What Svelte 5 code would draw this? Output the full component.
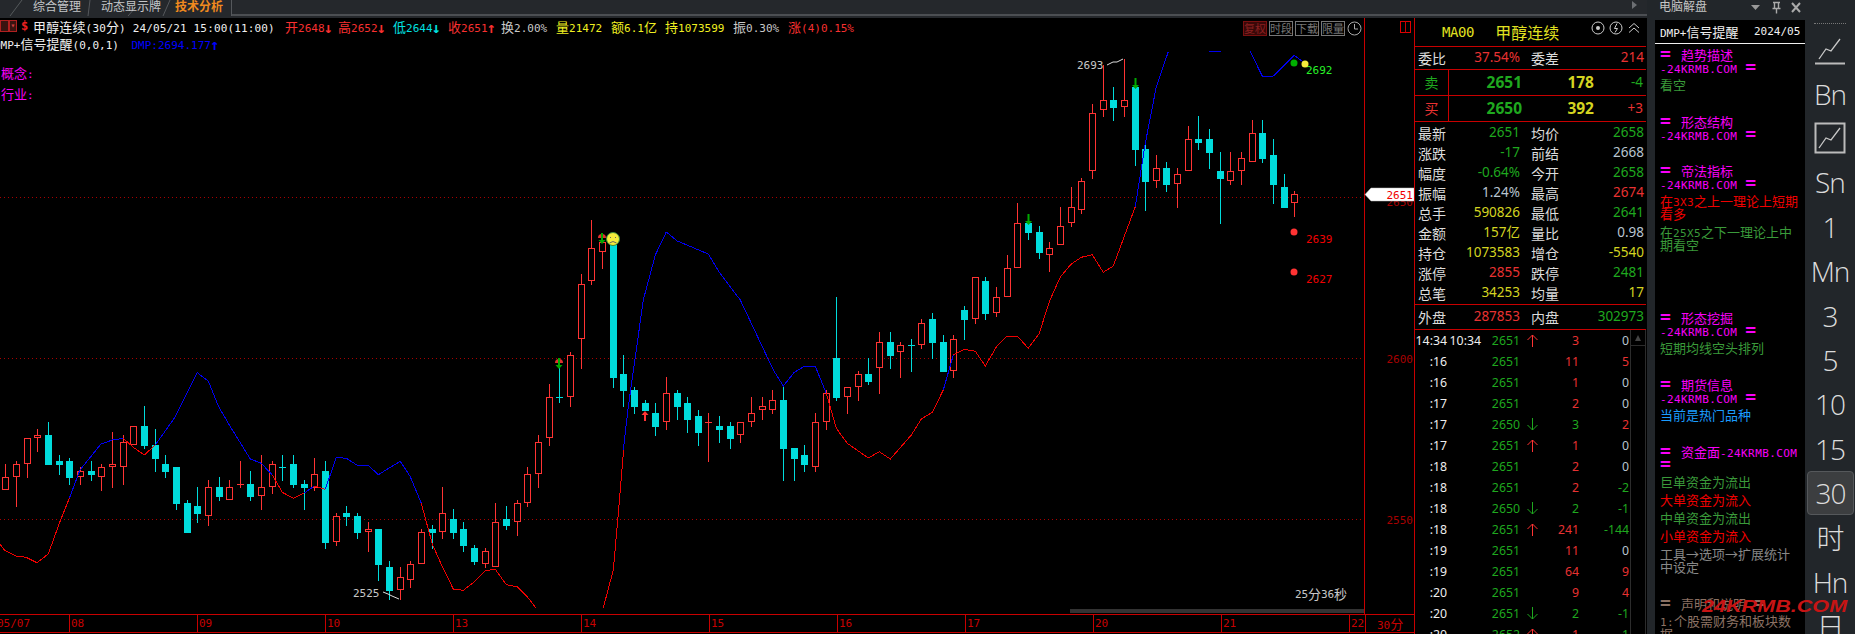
<script>
  const seg = (x0, y0, rows) => rows.map(([x, hi, top, bot, lo, up]) => {
    const col = Math.floor(x0 + x / 3);
    const r = (v) => Math.floor(y0 + v / 3);
    return { col, hi: r(hi), top: r(top), bot: r(bot), lo: r(lo), up: !!up, doji: bot - top < 5 };
  });
  const candles = [
    ...seg(0, 330, [
      [16,402,441,479,479,1],[49,393,403,440,528,1],[82,325,325,401,441,1],[112,297,316,323,363,1],[145,276,315,402,402,0],
      [178,375,393,402,432,0],[208,384,393,441,462,0],[241,411,424,440,462,1],[274,393,423,432,450,0],[304,402,412,440,480,1],
      [337,306,403,410,471,1],[370,315,337,410,462,1],[400,289,289,344,344,1],[433,228,288,345,354,0],[466,297,345,384,423,0],
      [496,375,402,423,441,0],[529,411,411,519,537,0],[562,510,519,606,606,0],[592,471,528,549,576,0],[625,450,472,557,585,1],
      [658,441,471,498,510,0],[688,450,472,509,509,1],[721,393,462,466,471,1],[751,423,462,498,510,0],[784,375,472,497,537,1],
      [817,393,403,470,489,1],[847,375,411,413,450,0],[880,375,402,462,471,0],[913,450,462,471,537,0],[943,384,433,471,480,1],
      [976,393,423,636,654,0],[1009,549,559,635,645,1],[1039,528,549,558,585,0],[1072,549,558,606,624,0],[1105,576,598,605,663,1],
      [1135,597,597,702,750,0],[1168,693,711,780,807,0],[1201,711,742,779,807,1],[1231,693,703,748,771,1],[1264,597,607,701,701,1],
      [1297,585,597,606,654,0],[1327,471,550,605,624,1],[1360,537,567,606,624,0],[1390,576,597,645,663,0],[1423,645,654,693,702,0],
    ]),
    ...seg(400, 420, [
      [256,384,394,430,441,1],[286,249,307,439,439,1],[319,258,297,315,327,0],[352,240,250,304,345,1],[382,141,163,248,258,1],[415,45,67,160,201,1],
    ]),
    ...seg(480, 200, [
      [208,552,592,713,735,1],[238,505,591,594,608,0],[271,456,466,590,618,1],[304,222,253,416,504,1],[334,60,145,242,252,1],
      [367,110,127,155,204,1],[400,135,135,531,561,0],[430,465,522,570,618,0],[463,561,570,618,639,0],[496,600,609,630,630,0],
      [526,609,639,678,705,0],[559,531,580,665,687,1],[592,570,579,618,657,0],[622,591,609,657,696,0],[655,630,648,696,735,0],
      [685,639,666,668,783,1],[718,648,678,687,726,0],[751,666,678,714,744,0],[781,667,667,704,726,1],[814,591,640,665,678,1],
      [847,591,619,628,657,1],[877,570,601,628,639,1],[910,561,600,744,840,0],[943,744,744,774,840,0],[973,735,765,792,813,0],
      [1006,639,667,800,813,1],[1039,570,580,665,687,1],[1069,291,474,591,600,0],[1102,562,562,590,639,1],[1135,513,523,560,600,1],
      [1165,474,522,543,552,0],[1198,396,427,503,579,1],[1231,396,426,465,504,0],[1261,426,436,455,531,1],[1294,417,435,438,513,0],
      [1324,357,370,434,444,1],[1357,339,357,426,474,0],[1390,405,426,513,513,0],[1420,405,418,512,531,1],
    ]),
    ...seg(900, 40, [
      [193,798,810,837,897,0],[226,712,712,836,849,1],[256,711,723,819,837,0],[289,741,772,818,828,1],[322,645,685,770,770,1],
      [352,489,550,683,683,1],[385,540,549,576,597,0],[418,558,576,636,654,0],[448,606,625,644,693,1],[481,501,559,614,614,1],
      [514,441,502,548,558,1],[544,414,424,509,519,1],[577,192,220,391,414,1],[610,75,181,209,228,1],[640,141,181,201,240,0],
      [673,57,181,200,228,1],[706,141,141,327,375,0],[736,306,327,423,510,0],[769,345,385,422,441,1],[799,366,384,432,453,0],
      [832,384,403,431,501,1],[865,258,298,392,392,1],[895,228,297,306,327,0],[928,267,297,336,384,0],[961,336,393,414,549,0],
      [991,336,394,422,432,1],[1024,336,355,392,432,1],[1057,240,280,365,365,1],[1087,240,279,354,366,0],[1120,297,345,432,489,0],
      [1153,402,441,501,501,0],[1183,453,463,488,528,1],
    ]),
  ];

  const poly = (x0, y0, pts) => pts.map(([x, y]) => `${(x0 + x / 3).toFixed(1)},${(y0 + y / 3).toFixed(1)}`).join(' ');
  const RED = '#f00000', BLUE = '#0000f0';
  const lines = [
    [RED, poly(0,330,[[0,643],[15,662],[48,678],[78,682],[111,698],[145,672],[178,580],[208,505]])],
    [BLUE, poly(0,330,[[208,505],[240,420],[303,342],[337,330],[370,325]])],
    [RED, poly(0,330,[[370,325],[400,352],[433,375],[466,345]])],
    [BLUE, poly(0,330,[[466,345],[526,260],[592,128],[625,153],[655,228],[688,285],[751,387],[784,400],[817,435]])],
    [RED, poly(0,330,[[817,435],[847,487],[880,505],[913,489]])],
    [BLUE, poly(0,330,[[913,489],[943,468]])],
    [RED, poly(0,330,[[943,468],[976,478]])],
    [BLUE, poly(0,330,[[976,478],[1009,382],[1039,385],[1072,406],[1105,406],[1135,434],[1201,394],[1231,440],[1264,520]])],
    [RED, poly(0,330,[[1264,520],[1297,642],[1327,710],[1360,777]])],
    [RED, poly(400,420,[[160,507],[190,511],[223,486],[256,452],[286,448],[319,494],[352,500],[385,534],[407,563]])],
    [RED, poly(400,420,[[610,563],[640,450],[655,280],[670,100],[670,90]])],
    [BLUE, poly(480,200,[[430,750],[445,620],[490,300],[526,165],[559,96],[592,123],[685,162],[720,220],[781,300],[880,510],[910,558],[943,517],[973,499],[1006,499],[1039,580]])],
    [RED, poly(480,200,[[1039,580],[1069,685],[1102,730],[1165,774],[1198,755],[1231,777],[1294,705],[1324,657],[1357,637],[1390,570]])],
    [BLUE, poly(480,200,[[1390,570],[1420,465]])],
    [RED, poly(900,40,[[160,945],[193,928],[226,934],[256,978],[289,921],[322,888],[352,888],[385,925],[418,880],[448,785],[481,711],[514,672],[544,652],[577,644],[610,697],[640,678],[706,500]])],
    [BLUE, poly(900,40,[[706,500],[736,310],[769,140],[805,35]])],
    [BLUE, poly(900,40,[[928,34],[963,34]])],
    [BLUE, poly(900,40,[[1050,34],[1087,108],[1120,108],[1183,46],[1215,70]])],
  ];

  const arrow = (x, top, bot, dir) => dir === 'down'
    ? `M${x - 1} ${top}h2v${bot - top - 4}h2.5l-3.5 4l-3.5 -4h2.5z`
    : `M${x} ${top}l3.5 4h-2.5v${bot - top - 4}h-2v-${bot - top - 4}h-2.5z`;

  const splitter = /([\u2191\u2193]|[\u2192\u2E80-\u9FFF\uFF00-\uFFEF]+)/;
  const runs = (s) => s.split(splitter).filter(Boolean).map((t) => ({
    t,
    k: t === '\u2191' || t === '\u2193' ? 'ar' : splitter.test(t) ? 'cj' : 'la',
  }));

  const days = ['08','09','10','13','14','15','16','17','20','21'];

  const stats = [
    ['最新','2651','g','均价','2658','g'],['涨跌','-17','g','前结','2668','s'],['幅度','-0.64%','g','今开','2658','g'],
    ['振幅','1.24%','s','最高','2674','r'],['总手','590826','y','最低','2641','g'],['金额','157亿','y','量比','0.98','s'],
    ['持仓','1073583','y','增仓','-5540','y'],['涨停','2855','r','跌停','2481','g'],['总笔','34253','y','均量','17','y'],
  ];

  const ticks = [
    [':34','2651','u','3','r','0','s'],[':16','2651','','11','r','5','r'],[':16','2651','','1','r','0','s'],[':17','2651','','2','r','0','s'],
    [':17','2650','d','3','g','2','r'],[':17','2651','u','1','r','0','s'],[':18','2651','','2','r','0','s'],[':18','2651','','2','r','-2','g'],
    [':18','2650','d','2','g','-1','g'],[':18','2651','u','241','r','-144','g'],[':19','2651','','11','r','0','s'],[':19','2651','','64','r','9','r'],
    [':20','2651','','9','r','4','r'],[':20','2651','d','2','g','-1','g'],[':20','2652','u','1','r','-1','g'],
  ];

  const M = 'm', G = 'pg', R = 'pr', B = 'pb', W = 'pw', N = 'pn';
  const panel = [
    { h:'趋势描述', cl:M, gap:0 },{ d:1, cl:M, gap:0 },{ t:'看空', cl:G, gap:5 },
    { h:'形态结构', cl:M, gap:23 },{ d:1, cl:M, gap:0 },
    { h:'帝法指标', cl:M, gap:23 },{ d:1, cl:M, gap:0 },
    { t:'在3X3之上一理论上短期', cl:R, gap:5 },{ t:'看多', cl:R, gap:0 },
    { t:'在25X5之下一理论上中', cl:G, gap:5 },{ t:'期看空', cl:G, gap:0 },
    { h:'形态挖掘', cl:M, gap:59 },{ d:1, cl:M, gap:0 },{ t:'短期均线空头排列', cl:G, gap:5 },
    { h:'期货信息', cl:M, gap:23 },{ d:1, cl:M, gap:0 },{ t:'当前是热门品种', cl:B, gap:5 },
    { h:'资金面-24KRMB.COM', cl:M, gap:23 },{ e:1, cl:M, gap:0 },
    { t:'巨单资金为流出', cl:G, gap:5 },{ t:'大单资金为流入', cl:R, gap:5 },{ t:'中单资金为流出', cl:G, gap:5 },{ t:'小单资金为流入', cl:R, gap:5 },
    { t:'工具→选项→扩展统计', cl:W, gap:5 },{ t:'中设定', cl:W, gap:0 },
    { h:'声明和说明', tail:1, cl:N, gap:23 },{ t:'1:个股需财务和板块数', cl:N, gap:5 },{ t:'据', cl:N, gap:0 },
  ];

  const side = ['Bn','#','Sn','1','Mn','3','5','10','15','30','时','Hn','日'];
</script>

{#snippet tx(s)}{#each runs(s) as r}<span class={r.k}>{r.t}</span>{/each}{/snippet}

{#snippet chartIcon(boxed)}
  <svg class="sicon" viewBox="0 0 32 32" width="32" height="32">
    {#if boxed}<rect x="1.5" y="1.5" width="29" height="29" class="istroke wide" />{:else}<path d="M1 30.5H31" class="istroke wide" />{/if}
    <path d="M5 26L12 16L17 18L26 6" class="istroke" />
  </svg>
{/snippet}

<div class="app">
  <div class="left">
    <header class="tabs">
      <svg class="slash" width="232" height="16"><path d="M10 16L22 0M88 16L90 0M128 16L135 8M163 16L170 0M231.5 0V16" /></svg>
      <span class="tab t1">综合管理</span>
      <span class="tab t2">动态显示牌</span>
      <span class="tab t3">技术分析</span>
      <span class="tri"></span>
    </header>
    <div class="body">
      <div class="chartcol">
        <div class="plot">
          <svg class="canvas" width="1414" height="596" viewBox="0 18 1414 596">
            <g class="grid">
              <path d="M0 197.5H1364M0 358.5H1368M0 519.5H1364" />
            </g>
            <g shape-rendering="crispEdges">
              {#each candles as c}
                <path d="M{c.col + 0.5} {c.hi}V{c.lo + 1}" stroke={c.up ? '#ff3333' : '#00dcdc'} />
                {#if c.doji}
                  <rect x={c.col - 3} y={c.top} width="7" height="1" fill={c.up ? '#ff3333' : '#00dcdc'} />
                {:else if c.up}
                  <rect x={c.col - 2.5} y={c.top + 0.5} width="6" height={c.bot - c.top} fill="#000" stroke="#ff3333" />
                {:else}
                  <rect x={c.col - 3} y={c.top} width="7" height={c.bot - c.top + 1} fill="#00dcdc" />
                {/if}
              {/each}
              {#each lines as [col, pts]}
                <polyline points={pts} fill="none" stroke={col} />
              {/each}
            </g>

            <path d={arrow(1028.5, 214, 225, 'down')} fill="#00a800" />
            <path d={arrow(1135.5, 78, 89, 'down')} fill="#00a800" />
            <path d={arrow(645, 411, 421, 'up')} fill="#ff3333" />
            <path d="M555 363a4 4 0 0 1 8 0z" fill="#e03030" /><path d={arrow(559, 358, 369, 'down')} fill="#00a800" />
            <path d="M598 238a4 4 0 0 1 8 0z" fill="#e03030" /><path d={arrow(602, 233, 244, 'down')} fill="#00a800" />

            <g class="smile">
              <circle cx="613" cy="239" r="6.5" fill="#f4ec3c" stroke="#3c8c3c" />
              <path d="M610.5 237v1M615.5 237v1" stroke="#666" fill="none" />
              <path d="M609.5 243q3.5 -3 7 0" stroke="#666" fill="none" />
            </g>

            <path d="M1107 65L1113 62H1117L1123 59" fill="none" stroke="#ddd" />
            <path d="M383 592L388 594L392 596L399 599" fill="none" stroke="#ddd" />
            <text x="1077" y="69" class="l w">2693</text>
            <text x="353" y="597" class="l w">2525</text>
            <text x="1306" y="74" class="l lg">2692</text>
            <text x="1306" y="243" class="l rr">2639</text>
            <text x="1306" y="283" class="l rr">2627</text>
            <circle cx="1294" cy="63" r="3.5" fill="#00b000" />
            <circle cx="1305" cy="64" r="3.5" fill="#f4e83c" />
            <circle cx="1294" cy="232" r="3.5" fill="#ff3333" />
            <circle cx="1294" cy="272" r="3.5" fill="#ff3333" />

            <rect x="1070" y="609" width="294" height="4" fill="#333" />
            <text x="1295" y="598" class="l w">25</text>
            <text x="1308" y="599" class="zh w">分</text>
            <text x="1321" y="598" class="l w">36</text>
            <text x="1334" y="599" class="zh w">秒</text>

            <path d="M1364.5 18V614" class="axis" />
            <rect x="1400.5" y="21.5" width="10" height="11" class="axisbox" />
            <path d="M1405.5 21V33" class="axis" />
            <text x="1413" y="363" text-anchor="end" class="l dr">2600</text>
            <text x="1413" y="524" text-anchor="end" class="l dr">2550</text>
            <text x="1413" y="206" text-anchor="end" class="l dr">2650</text>
            <polygon points="1365,194.5 1371,188 1414,188 1414,201 1371,201" fill="#fff" stroke="#bbb" stroke-width="0.5" />
            <text x="1413" y="199" text-anchor="end" class="l rr">2651</text>
          </svg>

          <div class="hdr h1">
            <span class="tbox a"></span><span class="tbox b">▾</span>
            <span class="dollar">$</span>
            <span class="wt name">{@render tx('甲醇连续(30分) 24/05/21 15:00(11:00)')}</span>
            <span class="rd at1">{@render tx('开2648↓')}</span><span class="rd at2">{@render tx('高2652↓')}</span>
            <span class="cy at3">{@render tx('低2644↓')}</span><span class="rd at4">{@render tx('收2651↑')}</span>
            <span class="gr at5">{@render tx('换2.00%')}</span><span class="yl at6">{@render tx('量21472')}</span>
            <span class="yl at7">{@render tx('额6.1亿')}</span><span class="yl at8">{@render tx('持1073599')}</span>
            <span class="gr at9">{@render tx('振0.30%')}</span><span class="rd at10">{@render tx('涨(4)0.15%')}</span>
          </div>
          <div class="hdr h2">
            <span class="wt">{@render tx('DMP+信号提醒(0,0,1)')}</span>
            <span class="bl dmp">{@render tx('DMP:2694.177↑')}</span>
          </div>
          <div class="hdr h3 mg">{@render tx('概念:')}</div>
          <div class="hdr h4 mg">{@render tx('行业:')}</div>
          <div class="btns">
            <span class="btn on">复权</span><span class="btn">时段</span><span class="btn">下载</span><span class="btn">限量</span>
            <svg width="15" height="15" viewBox="0 0 15 15"><circle cx="7.5" cy="7.5" r="6.5" fill="none" stroke="#aaa" /><path d="M7.5 3V8H11" fill="none" stroke="#aaa" /></svg>
          </div>
        </div>
        <div class="xaxis">
          <span class="xt first">{@render tx('05/07')}</span>
          {#each days as d}<span class="xt day">{@render tx(d)}</span>{/each}
          <span class="xt last">{@render tx('22')}</span>
          <span class="xt unit">{@render tx('30分')}</span>
        </div>
      </div>

      <aside class="quote">
        <div class="qhead">
          <span class="code">MA00</span>
          <span class="qname">甲醇连续</span>
          <svg class="qicons" width="50" height="16" viewBox="0 0 50 16">
            <circle cx="7" cy="8" r="6" /><circle cx="7" cy="8" r="2" class="solid" />
            <circle cx="25" cy="8" r="6" /><path d="M26 3.5L23.5 8.5H26.5L24 12.5" />
            <path d="M38 8L43 3.5L48 8M38 12.5L43 8L48 12.5" />
          </svg>
        </div>
        <div class="qrow wei">
          <span class="lb">委比</span><span class="val v1 r">37.54%</span><span class="lb l2">委差</span><span class="val v2 r">214</span>
        </div>
        <div class="bs">
          <span class="bsl g">卖</span><span class="bn p g">2651</span><span class="bn q y">178</span><span class="dl g">-4</span>
        </div>
        <div class="bs">
          <span class="bsl r">买</span><span class="bn p g">2650</span><span class="bn q y">392</span><span class="dl r">+3</span>
        </div>
        <div class="stats">
          {#each stats as [a, av, ac, b, bv, bc]}
            <div class="qrow st">
              <span class="lb">{a}</span><span class="val v1 {ac}">{av}</span><span class="lb l2">{b}</span><span class="val v2 {bc}">{bv}</span>
            </div>
          {/each}
        </div>
        <div class="qrow pan">
          <span class="lb">外盘</span><span class="val v1 r">287853</span><span class="lb l2">内盘</span><span class="val v2 g">302973</span>
        </div>
        <div class="tickwrap">
          <div class="ticks">
            {#each ticks as [tm, pr, ar, vo, vc, la, lc], i}
              <div class="tick">
                <span class="tt">{i === 0 ? '14:34' : tm}</span>
                <span class="tt2">{i === 0 ? '10:34' : ''}</span>
                <span class="tp g">{pr}</span>
                <span class="ta">
                  {#if ar === 'u'}
                    <svg width="11" height="13" viewBox="0 0 11 13"><path d="M5.5 13V1M0.5 6L5.5 1L10.5 6" fill="none" stroke="#ff3333" /></svg>
                  {:else if ar === 'd'}
                    <svg width="11" height="13" viewBox="0 0 11 13"><path d="M5.5 0V12M0.5 7L5.5 12L10.5 7" fill="none" stroke="#1fa81f" /></svg>
                  {/if}
                </span>
                <span class="tv {vc}">{vo}</span>
                <span class="tl {lc}">{la}</span>
              </div>
            {/each}
          </div>
          <div class="scroll"><span class="up"></span></div>
        </div>
      </aside>
    </div>
  </div>

  <div class="right">
    <div class="ptitle">
      <span class="pname">电脑解盘</span>
      <svg class="ptools" width="64" height="14" viewBox="0 0 64 14">
        <path d="M0 4H9L4.5 9z" fill="#999" />
        <path d="M22 1.5H29M23.5 1.5V7.5H27.5V1.5M21.5 7.5H29.5M25.5 7.5V12.5" fill="none" stroke="#aaa" stroke-width="1.4" />
        <path d="M41 2L49 11M49 2L41 11" fill="none" stroke="#aaa" stroke-width="2" />
      </svg>
    </div>
    <div class="rbody">
      <section class="panel">
        <div class="ptop">
          <span class="wt ptleft">{@render tx('DMP+信号提醒')}</span>
          <span class="wt ptdate">{@render tx('2024/05')}</span>
        </div>
        <div class="plines">
          {#each panel as p}
            <div class="pl {p.cl}" style="margin-top:{p.gap}px">
              {#if p.h}
                <span class="eq">=</span><span class="hh">{@render tx(p.h)}</span>{#if p.tail}<span class="eq tail">=</span>{/if}
              {:else if p.d}
                {@render tx('-24KRMB.COM')}<span class="eq tail">=</span>
              {:else if p.e}
                <span class="eq">=</span>
              {:else}
                {@render tx(p.t)}
              {/if}
            </div>
          {/each}
        </div>
      </section>
      <nav class="side">
        <div class="dots"></div>
        <div class="si">{@render chartIcon(false)}</div>
        {#each side as s}
          {#if s === '#'}
            <div class="si">{@render chartIcon(true)}</div>
          {:else}
            <div class="si" class:cur={s === '30'} class:zh2={s === '时' || s === '日'}>{s}</div>
          {/if}
        {/each}
      </nav>
    </div>
  </div>
  <div class="wm">24KRMB.COM</div>
</div>

<style>
  :global(html), :global(body) { margin: 0; background: #000; overflow: hidden; }
  .app {
    position: relative; display: flex; width: 1855px; height: 634px; overflow: hidden; background: #000;
    font-family: "DejaVu Sans Mono", "Noto Sans CJK SC", monospace; font-size: 11px; color: #ddd;
  }
  .app :global(.la) { font-size: 11px; }
  .app :global(.cj) { font-family: "Noto Sans CJK SC", sans-serif; font-size: 13px; }
  .app :global(.ar) { display: inline-block; width: 6.6px; font-size: 15px; line-height: 1; font-weight: 700; text-indent: -1px; vertical-align: -1px; }

  .left { width: 1647px; flex: none; display: flex; flex-direction: column; }
  .tabs { position: relative; display: flex; height: 18px; box-sizing: border-box; background: #25282c; border-bottom: 2px solid #25282c; font-family: "Noto Sans CJK SC", sans-serif; font-size: 12px; line-height: 11px; color: #c4c6c8; }
  .tabs::after { content: ""; position: absolute; left: 232px; right: 0; top: 14px; height: 2px; background: #4c4f53; }
  .slash { position: absolute; left: 0; top: 0; }
  .slash path { stroke: #55585c; fill: none; }
  .tab { position: absolute; top: 0; white-space: nowrap; }
  .t1 { left: 33px; } .t2 { left: 101px; } .t3 { left: 175px; color: #f08a1e; font-weight: 700; }
  .tri { position: absolute; left: 1632px; top: 1px; border-left: 5px solid #6c6f73; border-top: 4px solid transparent; border-bottom: 4px solid transparent; }

  .body { display: flex; height: 616px; }
  .chartcol { width: 1414px; flex: none; }
  .plot { position: relative; height: 596px; }
  .canvas { display: block; }
  .grid path { stroke: #a80000; stroke-dasharray: 1 3; fill: none; }
  .axis { stroke: #c80000; fill: none; }
  .axisbox { stroke: #e00000; fill: none; }
  .l { font: 11px "DejaVu Sans Mono", monospace; }
  .zh { font: 13px "Noto Sans CJK SC", sans-serif; }
  .w { fill: #c8c8c8; } .lg { fill: #28f028; } .rr { fill: #f00000; } .dr { fill: #a80000; }

  .hdr { position: absolute; white-space: pre; line-height: 17px; height: 17px; }
  .h1 { left: 0; top: 0; width: 1240px; }
  .h1 > span { position: absolute; top: 0; }
  .h2 { left: -6px; top: 17px; }
  .h3 { left: 1px; top: 46px; }
  .h4 { left: 1px; top: 67px; }
  .tbox { height: 12px; box-sizing: border-box; border: 1px solid #b02020; background: #3a1410; top: 2px !important; }
  .tbox.a { left: 0; width: 9px; }
  .tbox.b { left: 9px; width: 8px; color: #d04040; font-size: 8px; line-height: 10px; text-align: center; }
  .dollar { left: 21px; color: #f02020; font-weight: 700; font-size: 12px; }
  .name { left: 33px; letter-spacing: 0.15px; }
  .at1 { left: 285px; } .at2 { left: 338px; } .at3 { left: 393px; } .at4 { left: 448px; } .at5 { left: 501px; }
  .at6 { left: 556px; } .at7 { left: 611px; } .at8 { left: 665px; } .at9 { left: 733px; } .at10 { left: 788px; }
  .wt { color: #f0f0f0; } .rd { color: #f83030; } .cy { color: #00e0e0; } .gr { color: #c8c8c8; } .yl { color: #f0f020; } .bl { color: #0000ff; } .mg { color: #f800f8; }
  .dmp { margin-left: 6px; }
  .btns { position: absolute; left: 1243px; top: 3px; display: flex; gap: 2px; align-items: center; }
  .btn { box-sizing: border-box; width: 24px; height: 15px; border: 1px solid #777; color: #777; font-family: "Noto Sans CJK SC", sans-serif; font-size: 11px; line-height: 13px; text-align: center; }
  .btn.on { background: #3a0808; border-color: #7a1010; color: #8a2020; }

  .xaxis { display: flex; height: 19px; box-sizing: border-box; border-top: 1px solid #c80000; border-bottom: 1px solid #c80000; color: #c80000; line-height: 17px; overflow: hidden; }
  .xt { flex: none; box-sizing: border-box; padding-left: 1px; white-space: nowrap; }
  .first { width: 69px; text-indent: -3px; padding-left: 0; }
  .day { width: 128px; border-left: 1px solid #c80000; }
  .last { width: 16px; border-left: 1px solid #c80000; }
  .unit { width: 50px; border-left: 1px solid #c80000; padding-left: 11px; }

  .quote { width: 233px; flex: none; box-sizing: border-box; border-left: 1px solid #c80000; font-family: "Noto Sans", "Noto Sans CJK SC", sans-serif; font-size: 13.5px; display: flex; flex-direction: column; }
  .qhead { position: relative; height: 29px; flex: none; box-sizing: border-box; border-bottom: 1px solid #c80000; margin-right: 1px; color: #e0e020; display: flex; align-items: center; }
  .code { font: 14px "DejaVu Sans Mono", monospace; margin-left: 27px; letter-spacing: -0.4px; }
  .qname { font: 16px "Noto Sans CJK SC", sans-serif; margin-left: 21px; }
  .qicons { position: absolute; left: 176px; top: 2px; }
  .qicons circle, .qicons path { fill: none; stroke: #ccc; }
  .qicons .solid { fill: #ccc; stroke: none; }
  .qrow { position: relative; flex: none; margin-right: 1px; }
  .lb { position: absolute; left: 3px; top: 50%; transform: translateY(-50%); font: 14px "Noto Sans CJK SC", sans-serif; color: #dcdcdc; line-height: 1; }
  .lb.l2 { left: 116px; }
  .val { position: absolute; top: 50%; transform: translateY(-50%); line-height: 1; }
  .v1 { right: 126px; } .v2 { right: 2px; }
  .wei { height: 23px; box-sizing: border-box; border-bottom: 1px solid #c80000; }
  .bs { position: relative; flex: none; margin-right: 1px; height: 26px; box-sizing: border-box; border-bottom: 1px solid #c80000; }
  .bsl { position: absolute; left: 0; top: 0; width: 34px; height: 25px; border-right: 1px solid #c80000; text-align: center; font: 14px/25px "Noto Sans CJK SC", sans-serif; box-sizing: border-box; }
  .bn { position: absolute; top: 0; line-height: 25px; font-weight: 700; font-size: 15.5px; }
  .p { right: 124px; } .q { right: 52px; }
  .dl { position: absolute; right: 3px; top: 0; line-height: 25px; }
  .stats { flex: none; height: 183px; box-sizing: border-box; padding-top: 1px; border-bottom: 1px solid #c80000; margin-right: 1px; }
  .st { height: 20px; margin-right: 0; }
  .pan { height: 25px; box-sizing: border-box; border-bottom: 1px solid #c80000; }
  .r { color: #e83232; } .g { color: #1fa81f; } .y { color: #d4d420; } .s { color: #b8c4d0; }

  .tickwrap { flex: 1; display: flex; overflow: hidden; }
  .ticks { width: 215px; flex: none; font-size: 12.3px; }
  .tick { display: grid; grid-template-columns: 32px 34px 39px 24px 35px 50px; height: 21px; line-height: 21px; white-space: nowrap; }
  .tick span { text-align: right; }
  .tt, .tt2 { color: #eee; }
  .tick .ta { text-align: center; display: flex; align-items: center; justify-content: center; }
  .scroll { position: relative; width: 16px; box-sizing: border-box; border-left: 1px solid #2c2c2c; border-right: 1px solid #2c2c2c; }
  .scroll::before { content: ""; position: absolute; left: 0; right: 0; top: 15px; border-top: 1px solid #2c2c2c; }
  .up { position: absolute; left: 4px; top: 5px; border-bottom: 6px solid #444; border-left: 3.5px solid transparent; border-right: 3.5px solid transparent; }

  .right { flex: 1; display: flex; flex-direction: column; background: #22262a; }
  .ptitle { position: relative; height: 20px; flex: none; padding-left: 12px; color: #c4c4c4; }
  .pname { font: 12px/11px "Noto Sans CJK SC", sans-serif; display: block; }
  .ptools { position: absolute; left: 104px; top: 1px; }
  .rbody { display: flex; flex: 1; min-height: 0; padding-left: 8px; }
  .panel { width: 150px; flex: none; background: #000; overflow: hidden; }
  .ptop { position: relative; height: 24px; box-sizing: border-box; border-bottom: 1px solid #f0f0f0; line-height: 23px; white-space: pre; }
  .ptleft { position: absolute; left: 5px; }
  .ptdate { position: absolute; left: 99px; width: 46px; overflow: hidden; }
  .plines { padding: 3px 0 0 5px; }
  .pl { line-height: 13px; height: 13px; white-space: pre; letter-spacing: 0.4px; }
  .pl :global(.cj) { letter-spacing: 0; }
  .eq { font: 700 18px/13px "DejaVu Sans Mono", monospace; display: inline-block; width: 21px; }
  .eq.tail { margin-left: 8px; width: 12px; }
  .hh { display: inline-block; }
  .m { color: #f800f8; } .pg { color: #3a9a3a; } .pr { color: #f00000; } .pb { color: #1a9cff; } .pw { color: #888; } .pn { color: #8c7264; }

  .side { width: 50px; flex: none; box-sizing: border-box; overflow: hidden; font-family: "Open Sans", sans-serif; font-weight: 300; font-size: 28px; color: #dcdcdc; }
  .dots { height: 1px; margin: 3px 9px 2px 9px; border-top: 1px dotted #777; }
  .si { height: 44.4px; display: flex; align-items: center; justify-content: center; letter-spacing: -1px; line-height: 1; box-sizing: border-box; }
  .si.zh2 { font-family: "Noto Sans CJK SC", sans-serif; font-weight: 300; }
  .si.cur { margin: 0 1px 0 2px; background: #3c3e40; border: 1px solid #55585b; border-radius: 4px; }
  .sicon { display: block; }
  .istroke { fill: none; stroke: #c8c8c8; stroke-width: 1.3; }
  .istroke.wide { stroke: #bbb; stroke-width: 2; }

  .wm { position: absolute; left: 1702px; top: 598px; font: italic 700 17px/18px "Liberation Sans", sans-serif; color: #c81414; transform: scaleX(1.27); transform-origin: left center; white-space: nowrap; }
</style>
